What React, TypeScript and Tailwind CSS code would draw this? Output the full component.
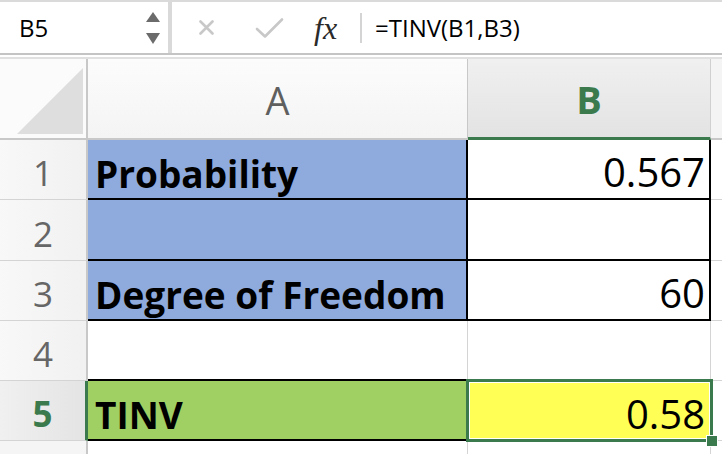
import React from "react";

const F = { fontFamily: '"Open Sans", "Noto Sans", sans-serif' };

function RowHead({ n, active }: { n: number; active?: boolean }) {
  return (
    <div
      className={
        "flex items-end justify-center pb-[9px] border-b border-[#d4d4d4] text-[35px] leading-none " +
        (active
          ? "bg-gradient-to-r from-[#f0f0f0] to-[#e4e4e4] text-[#3b7a4c] font-bold border-r-[3px] border-r-[#3b7a4c]"
          : "bg-gradient-to-r from-[#f8f8f8] to-[#f1f1f1] text-[#666666] border-r-2 border-r-[#c8c8c8]")
      }
    >
      {n}
    </div>
  );
}

export default function App() {
  return (
    <div className="w-[722px] h-[454px] overflow-hidden bg-white" style={F}>
      {/* Formula bar */}
      <div className="flex h-[53px] border-t-2 border-[#dadada] bg-white">
        <div className="flex w-[168px] items-center justify-between pl-[19px] pr-[8px]">
          <span className="text-[24px] leading-none text-black">B5</span>
          <div className="flex flex-col gap-[11px]">
            <svg width="14" height="10" viewBox="0 0 14 10"><polygon points="7,0 14,10 0,10" fill="#6b6b6b" /></svg>
            <svg width="14" height="11" viewBox="0 0 14 11"><polygon points="0,0 14,0 7,11" fill="#6b6b6b" /></svg>
          </div>
        </div>
        <div className="w-[4px] bg-[#d9d9d9]" />
        <div className="flex w-[188px] items-center">
          <svg className="ml-[27px]" width="15" height="15" viewBox="0 0 15 15">
            <path d="M1.5 1.5 L13.5 13.5 M13.5 1.5 L1.5 13.5" stroke="#c8c8c8" strokeWidth="2.6" strokeLinecap="round" />
          </svg>
          <svg className="ml-[41px]" width="29" height="22" viewBox="0 0 29 22">
            <path d="M2 12 L10 19.5 L27 2.5" stroke="#c8c8c8" strokeWidth="2.6" fill="none" strokeLinecap="round" strokeLinejoin="round" />
          </svg>
          <span
            className="ml-[30px] text-[32px] italic text-[#2a2a2a] leading-none"
            style={{ fontFamily: '"Liberation Serif", "DejaVu Serif", serif' }}
          >
            fx
          </span>
        </div>
        <div className="flex items-center">
          <div className="h-[30px] w-[2px] bg-[#d4d4d4]" />
        </div>
        <div className="flex items-center pl-[13px] text-[24px] leading-none text-black">=TINV(B1,B3)</div>
      </div>
      <div className="h-[2px] bg-[#c4c4c4]" />
      <div className="h-[2px] bg-white" />
      <div className="h-[2px] bg-[#e0e0e0]" />

      {/* Grid */}
      <div className="grid grid-cols-[88px_380px_243px_11px] grid-rows-[81px_60px_61px_60px_60px_60px_13px]">
        {/* Header row */}
        <div className="relative border-r-2 border-b-2 border-[#c8c8c8] bg-[#fbfbfb]">
          <svg className="absolute left-0 top-0" width="86" height="79" viewBox="0 0 86 79">
            <polygon points="17,75 83,9 83,75" fill="#dedede" />
          </svg>
        </div>
        <div className="flex items-center justify-center border-r border-b-2 border-[#c8c8c8] bg-gradient-to-b from-[#fcfcfc] to-[#f4f4f4] pt-[2px] text-[38px] leading-none text-[#5f5f5f]">
          A
        </div>
        <div className="flex items-center justify-center border-r border-[#d0d0d0] border-b-[3px] border-b-[#3b7a4c] bg-gradient-to-b from-[#f0f0f0] to-[#e3e3e3] pt-[2px] text-[38px] font-bold leading-none text-[#3b7a4c]">
          B
        </div>
        <div className="border-b-2 border-[#c8c8c8] bg-[#f4f4f4]" />

        {/* Row 1 */}
        <RowHead n={1} />
        <div className="flex items-end border-r-2 border-b-2 border-black bg-[#8faadc] pb-[6px] pl-[7px] text-[37px] font-bold leading-none text-black">
          Probability
        </div>
        <div className="flex items-end justify-end border-r-2 border-b-2 border-black bg-white pb-[6px] pr-[4px] text-[40px] leading-none text-black">
          0.567
        </div>
        <div className="border-b border-[#d4d4d4]" />

        {/* Row 2 */}
        <RowHead n={2} />
        <div className="border-r-2 border-b-2 border-black bg-[#8faadc]" />
        <div className="border-r-2 border-b-2 border-black bg-white" />
        <div className="border-b border-[#d4d4d4]" />

        {/* Row 3 */}
        <RowHead n={3} />
        <div className="flex items-end border-r-2 border-b-2 border-black bg-[#8faadc] pb-[6px] pl-[7px] text-[37px] font-bold leading-none text-black">
          Degree of Freedom
        </div>
        <div className="flex items-end justify-end border-r-2 border-b-2 border-black bg-white pb-[6px] pr-[4px] text-[40px] leading-none text-black">
          60
        </div>
        <div className="border-b border-[#d4d4d4]" />

        {/* Row 4 */}
        <RowHead n={4} />
        <div className="border-r border-b-2 border-[#d4d4d4] border-b-black" />
        <div className="border-r border-b border-[#d4d4d4]" />
        <div className="border-b border-[#d4d4d4]" />

        {/* Row 5 */}
        <RowHead n={5} active />
        <div className="flex items-end border-r-2 border-b-2 border-black bg-[#a0cf63] pb-[6px] pl-[7px] text-[37px] font-bold leading-none text-black">
          TINV
        </div>
        <div className="relative">
          <div className="absolute -left-[2px] -top-[2px] -right-[2px] -bottom-[1px] border-[3px] border-[#3b7a4c] p-[1px]">
            <div className="flex h-full items-end justify-end bg-[#ffff55] pb-[4px] pr-[4px] text-[40px] leading-none text-black">
              0.58
            </div>
          </div>
          <div className="absolute -right-[7px] -bottom-[6px] h-[12px] w-[12px] border border-white bg-[#3b7a4c]" />
        </div>
        <div className="border-b border-[#d4d4d4]" />

        {/* Row 6 partial */}
        <div className="border-r-2 border-[#c8c8c8] bg-[#f5f5f5]" />
        <div className="border-r border-[#d4d4d4]" />
        <div className="border-r border-[#d4d4d4]" />
        <div />
      </div>
    </div>
  );
}
